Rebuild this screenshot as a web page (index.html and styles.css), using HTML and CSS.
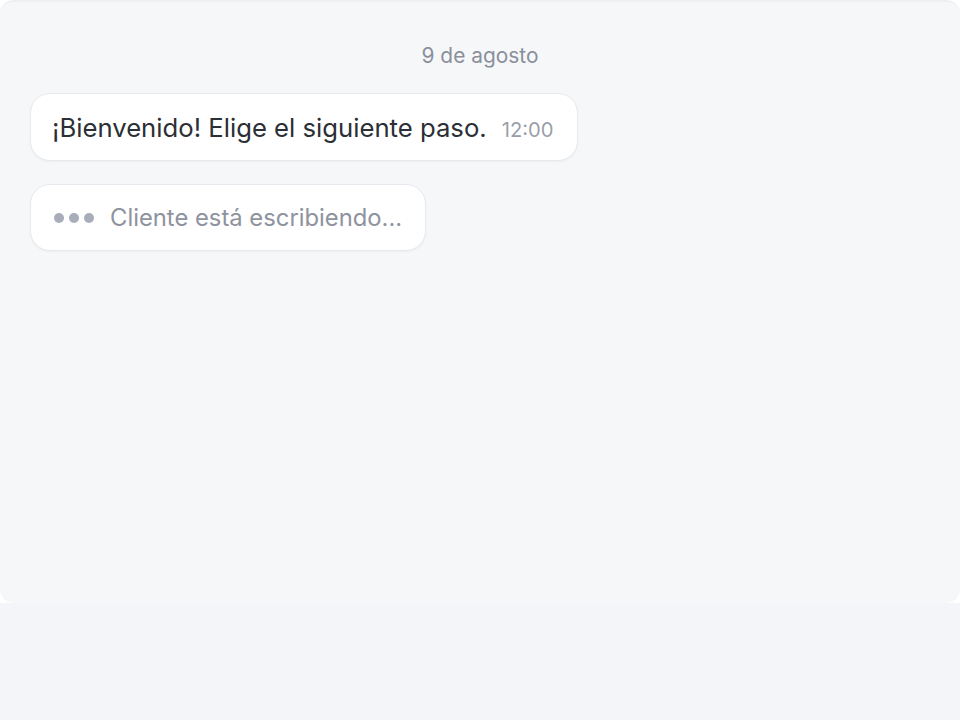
FILE: index.html
```html
<!DOCTYPE html>
<html lang="es">
<head>
<meta charset="UTF-8">
<meta name="viewport" content="width=device-width, initial-scale=1.0">
<title>Chat</title>
<link rel="stylesheet" href="styles.css">
</head>
<body>

<!-- ventana del chat -->
<div class="chat">
    <div class="date">9 de agosto</div>

    <div class="messages">
        <div class="bubble">
            <span class="text">¡Bienvenido! Elige el siguiente paso.</span>
            <span class="time">12:00</span>
        </div>

        <!-- indicador de escritura -->
        <div class="bubble typing">
            <span class="dots"><i></i><i></i><i></i></span>
            <span class="text">Cliente está escribiendo...</span>
        </div>
    </div>
</div>

<div class="bottom"></div>

</body>
</html>
```

FILE: styles.css
```css
body {
    margin: 0;
    background-color: #ffffff;
    font-family: Inter, "Noto Sans", sans-serif;
}
.chat {
    height: 603px;
    box-sizing: border-box;
    background-color: #f6f7f9;
    border-top: 2px solid #eff0f3;
    border-radius: 14px;
    padding: 42px 30px 0;
}
.date {
    text-align: center;
    font-size: 20.9px;
    line-height: 24px;
    color: #8a909b;
}
.messages {
    display: flex;
    flex-direction: column;
    align-items: flex-start;
    gap: 23px;
    margin-top: 25px;
}
.bubble {
    display: flex;
    align-items: center;
    background-color: #ffffff;
    border: 1px solid #e7e9ee;
    border-radius: 20px;
    padding: 19px 23px 18px 21px;
    box-shadow: 0 1px 2px rgba(0, 0, 0, 0.04);
}
.bubble .text {
    font-size: 25.7px;
    line-height: 28px;
    color: #2b2f36;
}
.time {
    margin-left: 15px;
    margin-top: 4px;
    font-size: 20.2px;
    color: #9a9fa9;
}
.typing .text {
    font-size: 23.8px;
    color: #8e939e;
}
.dots {
    display: flex;
    gap: 5px;
    margin-left: 2px;
    margin-right: 16px;
}
.dots i {
    width: 10px;
    height: 10px;
    border-radius: 50%;
    background-color: #a9adb9;
}
.bottom {
    height: 117px;
    background-color: #f4f5f8;
}
```
